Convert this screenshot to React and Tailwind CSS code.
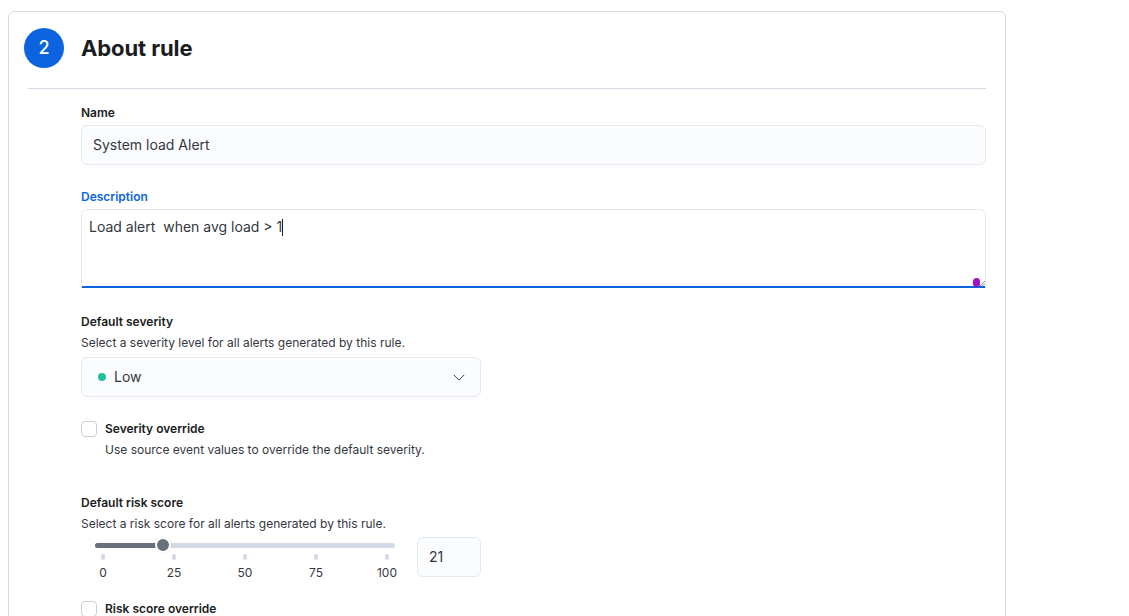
import React from 'react';

const font = { fontFamily: 'Inter, "Noto Sans", sans-serif' };

const Label = ({ children, color = 'text-[#1a1c21]', className = '' }) => (
  <div className={`h-4 text-xs leading-4 font-semibold ${color} ${className}`}>{children}</div>
);

const Help = ({ children, className = '' }) => (
  <div className={`h-4 text-xs leading-4 text-[#343741] ${className}`}>{children}</div>
);

const Checkbox = () => (
  <span className="w-4 h-4 shrink-0 rounded-[4px] border border-[#c9cfd9] bg-white" />
);

const ticks = [0, 25, 50, 75, 100];

const RiskSlider = ({ value }) => {
  // track runs 95..395, ticks 103..387 in page coords; box starts at 81
  const pct = value / 100;
  const thumbX = 22 + pct * 284;
  return (
    <div className="relative w-[328px] h-10">
      <div className="absolute left-[14px] top-[5px] w-[300px] h-[5px] rounded-full bg-[#d3dae6]" />
      <div className="absolute left-[14px] top-[5px] h-[5px] rounded-full bg-[#69707d]" style={{ width: thumbX - 14 }} />
      <div
        className="absolute w-[16px] h-[16px] rounded-full bg-[#69707d] border-2 border-white shadow-[0_0_0_1px_rgba(0,0,0,0.05)]"
        style={{ left: thumbX - 8, top: -1 }}
      />
      {ticks.map((t) => (
        <div key={t} className="absolute top-[16px] flex flex-col items-center w-8" style={{ left: 22 + (t / 100) * 284 - 16 }}>
          <span className="w-[4px] h-[6px] rounded-full bg-[#d3dae6]" />
          <span className="mt-[5px] text-xs leading-4 text-[#343741]">{t}</span>
        </div>
      ))}
    </div>
  );
};

export default function App() {
  return (
    <div className="min-h-screen bg-white pl-2 pt-[11px]" style={font}>
      <div className="w-[998px] h-[700px] rounded-md border border-[#d3dae6] bg-white pl-[15px] pr-4 py-4">
        <div className="flex items-center gap-[17px]">
          <div className="w-10 h-10 rounded-full bg-[#0b64dd] flex items-center justify-center text-white text-lg font-medium">
            2
          </div>
          <h2 className="text-[22px] font-bold text-[#1a1c21] tracking-[-0.1px]">About rule</h2>
        </div>

        <div className="ml-1 mr-[3px] mt-5 h-px bg-[#d3dae6]" />

        <div className="pl-[57px] pr-[3px]">
          <Label className="mt-4">Name</Label>
          <div className="mt-1 h-10 rounded-md border border-[#e3e8f0] bg-[#fbfcfd] px-[11px] flex items-center text-sm text-[#343741]">
            System load Alert
          </div>

          <Label className="mt-6" color="text-[#0b64dd]">Description</Label>
          <div className="relative mt-1 h-[79px] rounded-t-md border border-b-0 border-[#e3e8f0] bg-white">
            <div className="px-[7px] pt-[7px] text-sm leading-5 text-[#343741] whitespace-pre flex items-center">
              Load alert  when avg load &gt; 1<span className="inline-block w-px h-[17px] bg-[#1a1c21]" />
            </div>
            <div className="absolute left-0 right-0 bottom-0 h-[2px] bg-[#0b64dd]" />
            <span className="absolute right-[5px] bottom-[1px] w-[7px] h-[9px] rounded-full bg-[#a012c8]" />
            <svg className="absolute right-0 bottom-[2px]" width="6" height="6" viewBox="0 0 6 6">
              <path d="M1 6L6 1M3.5 6L6 3.5" stroke="#69707d" strokeWidth="0.8" />
            </svg>
          </div>

          <Label className="mt-[26px]">Default severity</Label>
          <Help className="mt-[5px]">Select a severity level for all alerts generated by this rule.</Help>
          <div className="mt-[6px] w-[400px] h-10 rounded-md border border-[#e3e8f0] bg-[#fbfcfd] pl-4 pr-3 flex items-center">
            <span className="w-2 h-2 rounded-full bg-[#20c19e]" />
            <span className="ml-2 text-sm text-[#343741]">Low</span>
            <svg className="ml-auto mr-[2px]" width="14" height="14" viewBox="0 0 16 16" fill="none">
              <path d="M2 5.5l6 6 6-6" stroke="#343741" strokeWidth="1.1" />
            </svg>
          </div>

          <div className="mt-[24px] flex gap-2">
            <Checkbox />
            <div className="flex flex-col">
              <Label>Severity override</Label>
              <Help className="mt-[5px]">Use source event values to override the default severity.</Help>
            </div>
          </div>

          <Label className="mt-[37px]">Default risk score</Label>
          <Help className="mt-[5px]">Select a risk score for all alerts generated by this rule.</Help>
          <div className="mt-[5px] flex items-start gap-2">
            <div className="pt-px">
              <RiskSlider value={21} />
            </div>
            <div className="w-16 h-10 rounded-md border border-[#e3e8f0] bg-[#fbfcfd] px-[11px] flex items-center text-sm text-[#343741]">
              21
            </div>
          </div>

          <div className="mt-[23px] flex gap-2">
            <Checkbox />
            <Label>Risk score override</Label>
          </div>
        </div>
      </div>
    </div>
  );
}
